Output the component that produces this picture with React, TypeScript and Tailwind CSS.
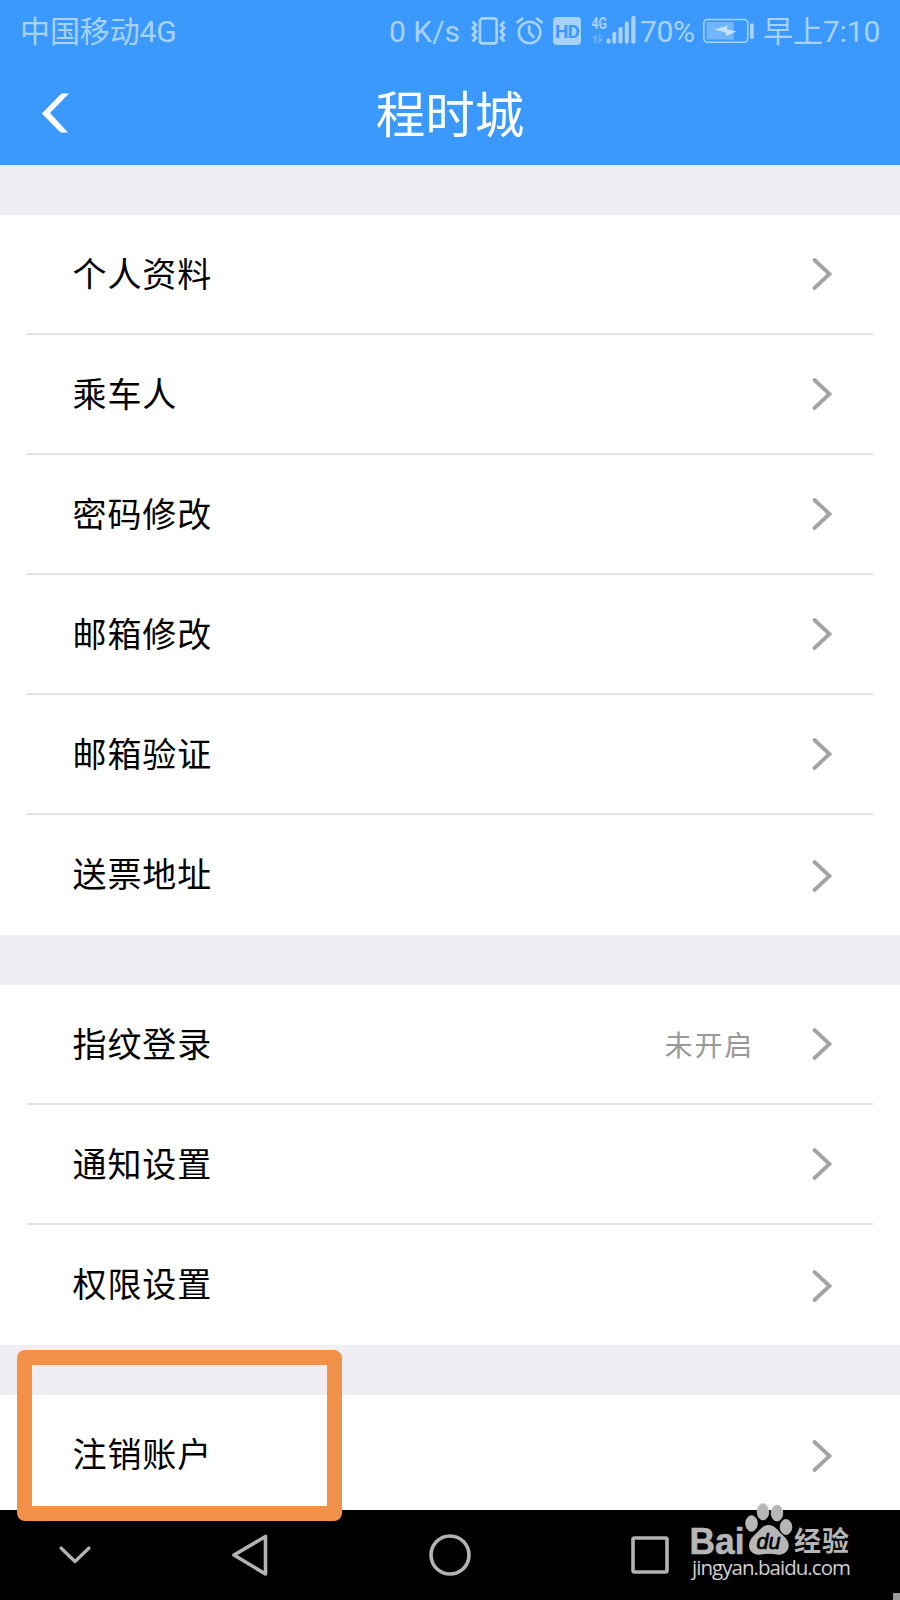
import { clsx } from 'clsx';

type Item = {
  label: string;
  value?: string;
};

const groups: Item[][] = [
  [
    { label: '个人资料' },
    { label: '乘车人' },
    { label: '密码修改' },
    { label: '邮箱修改' },
    { label: '邮箱验证' },
    { label: '送票地址' },
  ],
  [
    { label: '指纹登录', value: '未开启' },
    { label: '通知设置' },
    { label: '权限设置' },
  ],
  [{ label: '注销账户' }],
];

function VibrateIcon() {
  return (
    <svg width="36" height="28" viewBox="0 0 36 28" fill="none" stroke="currentColor" strokeWidth="2.6">
      <rect x="9" y="1.4" width="16.6" height="25" rx="2.5" />
      <path d="M1.5 4.5 5 8 2 11 5 14.5 2 18 5 21 1.5 24.5" strokeWidth="2.8" />
      <path d="M33.5 4.5 30 8 33 11 30 14.5 33 18 30 21 33.5 24.5" strokeWidth="2.8" />
    </svg>
  );
}

function AlarmIcon() {
  return (
    <svg width="28" height="28" viewBox="0 0 28 28" fill="none" stroke="currentColor" strokeWidth="2.6" strokeLinecap="round">
      <circle cx="13.6" cy="15.5" r="10.8" />
      <path d="M13.2 9.2v6.3l4.3 4.5" />
      <path d="M1.4 5.3 6.2 1.6M25.8 5.3 21 1.6" />
    </svg>
  );
}

function SignalIcon() {
  return (
    <svg className="overflow-visible" width="46" height="36" viewBox="0 -4 46 36" fill="currentColor">
      <text x="0.5" y="12" fontSize="16" fontWeight="700" textLength="15.5" lengthAdjust="spacingAndGlyphs">4G</text>
      <path d="M5.5 17v9.5H3.5V21.500H0.5ZM7.5 17H9.5v5H12.5L7.500 27Z" opacity=".45" />
      <rect x="15.5" y="21.500" width="4" height="5" rx="1.5" />
      <rect x="21.3" y="15" width="4" height="11.5" rx="1.5" />
      <rect x="27.5" y="10" width="4" height="16.5" rx="1.5" />
      <rect x="33.8" y="4.5" width="4" height="22" rx="1.5" />
      <rect x="40.3" y="-1" width="4.2" height="27.5" rx="1.5" />
    </svg>
  );
}

function BatteryIcon() {
  return (
    <svg width="52" height="26" viewBox="0 0 52 26">
      <rect x="0.9" y="1.4" width="43.8" height="22.8" rx="3.5" fill="none" stroke="currentColor" strokeWidth="1.5" />
      <rect x="3.5" y="4" width="27" height="17.6" fill="currentColor" opacity=".5" />
      <path d="M11.5 11.5 24.5 7.5 24 11.3 33.5 13.5 23 18 22.5 14.5Z" fill="#c4e1ff" />
      <rect x="47" y="5.3" width="3.8" height="15.5" rx="1.6" fill="currentColor" />
    </svg>
  );
}

function StatusBar() {
  return (
    <div className="flex h-[62px] items-center text-[30px] leading-none whitespace-nowrap text-[#a6d2fd]">
      <span className="ml-[20px] w-[369px] pt-px tracking-[-0.1px]">中国移动4G</span>
      <span className="w-[82px] pt-px">0 K/s</span>
      <VibrateIcon />
      <span className="ml-[9px]">
        <AlarmIcon />
      </span>
      <span className="ml-[9px] flex h-7 w-7 items-center justify-center rounded bg-[#a6d2fd] text-[19px] font-bold tracking-tighter text-[#3b99fc]">
        HD
      </span>
      <span className="ml-[10px]">
        <SignalIcon />
      </span>
      <span className="ml-[3px] w-[63px] pt-px tracking-[-0.3px]">70%</span>
      <BatteryIcon />
      <span className="ml-[8px] pt-px tracking-[-0.1px]">早上7:10</span>
    </div>
  );
}

function Header() {
  return (
    <header className="h-[165px] bg-[#3b99fc]">
      <StatusBar />
      <div className="grid h-[103px] grid-cols-[1fr_auto_1fr] items-center">
        <svg className="mt-[-2px] ml-[41px]" width="30" height="40" viewBox="0 0 30 40" fill="#fff">
          <path d="M20.5 0.5H28L9 20 27 39.5H19.5L0.8 20.5Z" />
        </svg>
        <h1 className="pt-[7px] text-[49.5px] leading-none text-white">程时城</h1>
      </div>
    </header>
  );
}

function Row({ item, last }: { item: Item; last: boolean }) {
  return (
    <li
      className={clsx(
        'mx-[27px] flex h-[120px] items-center border-b-2 pr-[41px] pl-[45.5px]',
        last ? 'border-transparent' : 'border-[#e2e2e2]'
      )}
    >
      <span className="flex-1 pt-px text-[34px] leading-none tracking-[0.9px] text-black">{item.label}</span>
      {item.value && (
        <span className="mr-[58px] pt-[5px] text-[28px] leading-none tracking-[1.8px] text-[#999]">{item.value}</span>
      )}
      <svg
        className={last ? 'mt-[4px]' : ''}
        width="20"
        height="34"
        viewBox="0 0 20 34"
        fill="none"
        stroke="#a3a3a3"
        strokeWidth="3.8"
        strokeLinecap="round"
      >
        <path d="M2.5 3 17.5 17 2.5 31" />
      </svg>
    </li>
  );
}

function NavBar() {
  return (
    <nav className="h-[90px] bg-black">
      <svg width="900" height="90" viewBox="0 0 900 90" fill="none" stroke="#b3b3b3" strokeWidth="3.6" strokeLinecap="round" strokeLinejoin="round">
        <path d="M61 38 75 51.5 89 38" strokeWidth="3.2" />
        <path d="M234 45 265.5 26.5V64Z" />
        <circle cx="450" cy="45" r="19" />
        <rect x="633" y="28" width="34" height="34" rx="1.5" />
      </svg>
    </nav>
  );
}

function Watermark() {
  return (
    <svg className="absolute right-0 bottom-0" width="220" height="104" viewBox="0 0 220 104" fill="#b6b6b6">
      <text x="9.5" y="57.5" fontSize="36" fontWeight="700" textLength="55" lengthAdjust="spacingAndGlyphs" stroke="#b6b6b6" strokeWidth="0.6" className="font-['Liberation_Sans']">
        Bai
      </text>
      <g stroke="#c8c8c8" strokeWidth="0.8">
        <ellipse cx="71.5" cy="27.5" rx="5.8" ry="7.8" />
        <ellipse cx="83" cy="15.7" rx="5.8" ry="8.2" />
        <ellipse cx="97" cy="17" rx="5.8" ry="8" />
        <ellipse cx="106" cy="31" rx="5.8" ry="7.5" />
      </g>
      <path d="M88.5 29C94 29 98 34 101 37.5C105 41 109 45 108.700 50C108.500 56 103 59.500 97 58.500C92 57.500 86 57.500 81 58.500C74 59.500 69.500 56 69 50C69 45 72 41 76 37.500C80 34 83 29 88.500 29Z" />
      <text x="76.5" y="53" fontSize="22" fill="#000" stroke="#000" strokeWidth="0.7" textLength="24" lengthAdjust="spacingAndGlyphs" className="font-['Liberation_Sans'] italic">
        du
      </text>
      <text x="114" y="54.5" fontSize="27" fontWeight="700" textLength="55" className="font-['Noto_Sans_CJK_SC']">
        经验
      </text>
      <text x="12" y="79" fontSize="20.5" fill="#d0d0d0" textLength="159" className="font-['Open_Sans']">
        jingyan.baidu.com
      </text>
      <rect x="213" y="97" width="7" height="7" fill="#999" />
    </svg>
  );
}

export default function App() {
  return (
    <div className="relative h-[1600px] w-[900px] overflow-hidden bg-[#eeeef3] font-[Roboto,'Noto_Sans_CJK_SC',sans-serif]">
      <Header />
      <main className="flex h-[1345px] flex-col gap-[50px] overflow-hidden pt-[50px]">
        {groups.map((items, index) => (
          <ul key={index} className="bg-white">
            {items.map((item, i) => (
              <Row key={item.label} item={item} last={i === items.length - 1} />
            ))}
          </ul>
        ))}
      </main>
      <NavBar />

      {/* Callout around the last entry */}
      <div className="absolute top-[1350px] left-[17px] h-[171px] w-[325px] rounded-lg border-[15px] border-[#f2914a]" />
      <Watermark />
    </div>
  );
}
